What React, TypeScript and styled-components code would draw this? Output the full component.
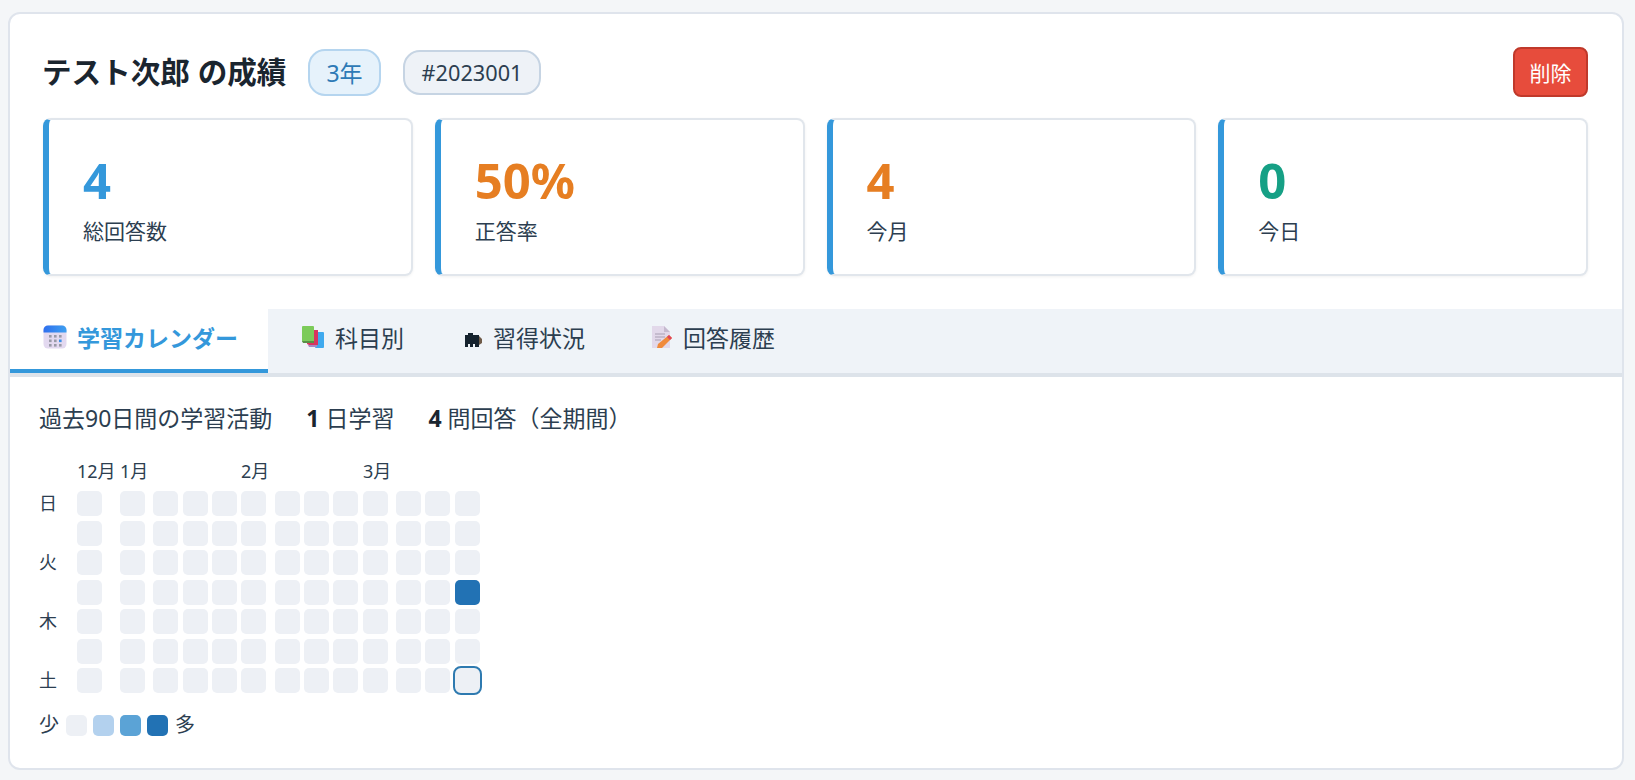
import React from "react";
import styled, { createGlobalStyle } from "styled-components";

const FONT = `"Noto Sans", "Noto Sans CJK JP", sans-serif`;

const GlobalStyle = createGlobalStyle`
  html, body {
    margin: 0;
    background: #f4f6f8;
    font-family: ${FONT};
    color: #2c3e50;
  }
`;

const Page = styled.div`
  height: 780px;
  padding: 12px 11px 0 8px;
  box-sizing: border-box;
  overflow: hidden;
`;

const Card = styled.div`
  height: 758px;
  box-sizing: border-box;
  background: #fff;
  border: 2px solid #dfe4ec;
  border-radius: 12px;
  overflow: hidden;
`;

const Header = styled.div`
  display: flex;
  align-items: center;
  padding: 33px 34px 21px 32px;
`;

const Title = styled.h1`
  margin: 0 22px 0 0;
  font-size: 29.6px;
  line-height: 50px;
  font-weight: 700;
  color: #1a252f;
`;

const Pill = styled.span<{ $grade?: boolean }>`
  display: inline-flex;
  align-items: center;
  box-sizing: border-box;
  height: ${(p) => (p.$grade ? 47 : 45)}px;
  padding: 0 ${(p) => (p.$grade ? 16 : 17)}px;
  margin-right: 22px;
  font-size: ${(p) => (p.$grade ? 23 : 21.7)}px;
  border-radius: 17px;
  border: 2px solid ${(p) => (p.$grade ? "#b5d5ef" : "#c6d4e3")};
  background: ${(p) => (p.$grade ? "#e6f2fb" : "#eef2f7")};
  color: ${(p) => (p.$grade ? "#2e7ab6" : "#2c3e50")};
`;

const DeleteButton = styled.button`
  margin-left: auto;
  width: 75px;
  height: 50px;
  padding: 0;
  border: 2px solid #c0392b;
  border-radius: 8px;
  background: #e74c3c;
  color: #fff;
  font-family: ${FONT};
  font-size: 21px;
`;

const StatGrid = styled.div`
  display: grid;
  grid-template-columns: repeat(4, 1fr);
  gap: 22px;
  padding: 0 34px 33px 33px;
`;

const StatCard = styled.div`
  height: 158px;
  box-sizing: border-box;
  padding: 27px 0 0 34px;
  border: 2px solid #e1e6ec;
  border-left: 6px solid #3498db;
  border-radius: 8px;
  background: #fff;
  box-shadow: 0 1px 3px rgba(0, 0, 0, 0.06);
`;

const StatValue = styled.div<{ $color: string }>`
  font-size: 49px;
  line-height: 66px;
  font-weight: 700;
  color: ${(p) => p.$color};
`;

const StatLabel = styled.div`
  margin-top: 4px;
  font-size: 21px;
  line-height: 28px;
  color: #2c3e50;
`;

const TabBar = styled.div`
  display: flex;
  height: 68px;
  box-sizing: border-box;
  background: #eff3f8;
  border-bottom: 4px solid #dde3ea;
`;

const Tab = styled.div<{ $active?: boolean; $width: number }>`
  display: flex;
  align-items: center;
  gap: 10px;
  box-sizing: border-box;
  width: ${(p) => p.$width}px;
  padding: 0 0 4px 33px;
  height: 64px;
  font-size: 23px;
  font-weight: ${(p) => (p.$active ? 700 : 400)};
  color: ${(p) => (p.$active ? "#3498db" : "#2c3e50")};
  background: ${(p) => (p.$active ? "#fff" : "transparent")};
  border-bottom: 4px solid ${(p) => (p.$active ? "#3498db" : "transparent")};
`;

const TabIcon = styled.svg`
  width: 24px;
  height: 24px;
  flex: none;
`;

const Content = styled.div`
  padding: 25px 0 0 29px;
`;

const Summary = styled.div`
  display: flex;
  gap: 34px;
  font-size: 23px;
  line-height: 32px;
  color: #2c3e50;
  strong {
    color: #1a252f;
  }
`;

const Heatmap = styled.div`
  display: flex;
  margin-top: 22px;
`;

const DayColumn = styled.div`
  display: flex;
  flex-direction: column;
  gap: 4.5px;
  width: 38px;
  padding-top: 35px;
`;

const DayLabel = styled.div`
  height: 25px;
  font-size: 18px;
  line-height: 25px;
`;

const Week = styled.div<{ $gap: number }>`
  display: flex;
  flex-direction: column;
  gap: 4.5px;
  width: 25px;
  margin-left: ${(p) => p.$gap}px;
`;

const MonthSlot = styled.div`
  height: 30.5px;
  font-size: 18px;
  line-height: 31px;
  white-space: nowrap;
`;

const Cell = styled.div<{ $level?: number; $today?: boolean }>`
  width: 25px;
  height: 25px;
  border-radius: 5px;
  background: ${(p) => LEVELS[p.$level ?? 0]};
  ${(p) => (p.$today ? "outline: 2px solid #2e7ab0; outline-offset: 0; border-radius: 6px;" : "")}
`;

const Legend = styled.div`
  display: flex;
  align-items: center;
  margin-top: 19px;
  font-size: 20px;
  line-height: 26px;
`;

const LegendCells = styled.div`
  display: flex;
  gap: 6px;
  margin: 0 7px 0 7px;
`;

const LegendCell = styled.div<{ $level: number }>`
  width: 21px;
  height: 21px;
  border-radius: 5px;
  background: ${(p) => LEVELS[p.$level]};
`;

const LEVELS = ["#edf0f5", "#b3d1ee", "#5ba3d6", "#2272b4"];

const STATS = [
  { value: "4", label: "総回答数", color: "#3498db" },
  { value: "50%", label: "正答率", color: "#e67e22" },
  { value: "4", label: "今月", color: "#e67e22" },
  { value: "0", label: "今日", color: "#16a085" },
];

const DAYS = ["日", "", "火", "", "木", "", "土"];

// gap before each week column: the source lays these out unevenly
const WEEK_GAPS = [0, 18, 8, 5, 4, 4, 9, 4, 4, 5, 8, 4, 5];
const MONTHS: Record<number, string> = { 0: "12月", 1: "1月", 5: "2月", 9: "3月" };

const CalendarIcon = () => (
  <TabIcon viewBox="0 0 24 24">
    <defs>
      <linearGradient id="calTop" x1="0" y1="0" x2="1" y2="0">
        <stop offset="0" stopColor="#2f6fee" />
        <stop offset="1" stopColor="#3ea0f0" />
      </linearGradient>
    </defs>
    <rect x="0.5" y="0.5" width="23" height="23" rx="4.5" fill="#e3d9f0" />
    <path d="M.5 7.5V5A4.5 4.5 0 0 1 5 .5h14A4.5 4.5 0 0 1 23.5 5v2.5z" fill="url(#calTop)" />
    {[6, 11, 16].map((x) =>
      [10, 14.5, 19].map((y) => (
        <rect key={`${x}-${y}`} x={x} y={y} width="2.6" height="2.6" fill={x === 16 && y === 14.5 ? "#3b8fe8" : "#9a9aa8"} />
      ))
    )}
  </TabIcon>
);

const BooksIcon = () => (
  <TabIcon viewBox="0 0 24 24">
    <rect x="14" y="7" width="9" height="16" rx="1" fill="#3fa9ee" />
    <path d="M6 5h11v15H8l-2-1z" fill="#d9345f" />
    <path d="M7 20h9v2H8z" fill="#a68ac4" />
    <rect x="1" y="1" width="12" height="16" rx="1" fill="#7ccb5a" />
    <path d="M1 16h12v2H2z" fill="#5a8f48" />
  </TabIcon>
);

const BlockIcon = () => (
  <TabIcon viewBox="0 0 24 24">
    <path d="M6 10h3V8h5v2h6v12h-4v-3h-2v3h-3v-3H9v3H6z" fill="#15222e" />
    <path d="M20 11l3 3v4l-3 2z" fill="#6e5a48" />
  </TabIcon>
);

const MemoIcon = () => (
  <TabIcon viewBox="0 0 24 24">
    <path d="M3 1h12l6 6v16H3z" fill="#e2d8ea" />
    <path d="M15 1l6 6h-6z" fill="#c5b9cf" />
    <path d="M6 9h10M6 12h10M6 15h6" stroke="#a79db2" strokeWidth="1.2" />
    <path d="M20 10l3 3-10 10H8l1-4z" fill="#f08a3c" />
    <path d="M20 10l3 3-2 2-3-3z" fill="#e0445a" />
  </TabIcon>
);

const TABS = [
  { label: "学習カレンダー", icon: <CalendarIcon />, width: 258, active: true },
  { label: "科目別", icon: <BooksIcon />, width: 158 },
  { label: "習得状況", icon: <BlockIcon />, width: 190 },
  { label: "回答履歴", icon: <MemoIcon />, width: 200 },
];

export default function App() {
  return (
    <Page>
      <GlobalStyle />
      <Card>
        <Header>
          <Title>テスト次郎 の成績</Title>
          <Pill $grade>3年</Pill>
          <Pill>#2023001</Pill>
          <DeleteButton>削除</DeleteButton>
        </Header>
        <StatGrid>
          {STATS.map((s) => (
            <StatCard key={s.label}>
              <StatValue $color={s.color}>{s.value}</StatValue>
              <StatLabel>{s.label}</StatLabel>
            </StatCard>
          ))}
        </StatGrid>
        <TabBar>
          {TABS.map((t) => (
            <Tab key={t.label} $active={t.active} $width={t.width}>
              {t.icon}
              {t.label}
            </Tab>
          ))}
        </TabBar>
        <Content>
          <Summary>
            <span>過去90日間の学習活動</span>
            <span>
              <strong>1</strong> 日学習
            </span>
            <span>
              <strong>4</strong> 問回答（全期間）
            </span>
          </Summary>
          <Heatmap>
            <DayColumn>
              {DAYS.map((d, i) => (
                <DayLabel key={i}>{d}</DayLabel>
              ))}
            </DayColumn>
            {WEEK_GAPS.map((gap, w) => (
              <Week key={w} $gap={gap}>
                <MonthSlot>{MONTHS[w]}</MonthSlot>
                {DAYS.map((_, d) => (
                  <Cell
                    key={d}
                    $level={w === 12 && d === 3 ? 3 : 0}
                    $today={w === 12 && d === 6}
                  />
                ))}
              </Week>
            ))}
          </Heatmap>
          <Legend>
            少
            <LegendCells>
              {LEVELS.map((_, i) => (
                <LegendCell key={i} $level={i} />
              ))}
            </LegendCells>
            多
          </Legend>
        </Content>
      </Card>
    </Page>
  );
}
